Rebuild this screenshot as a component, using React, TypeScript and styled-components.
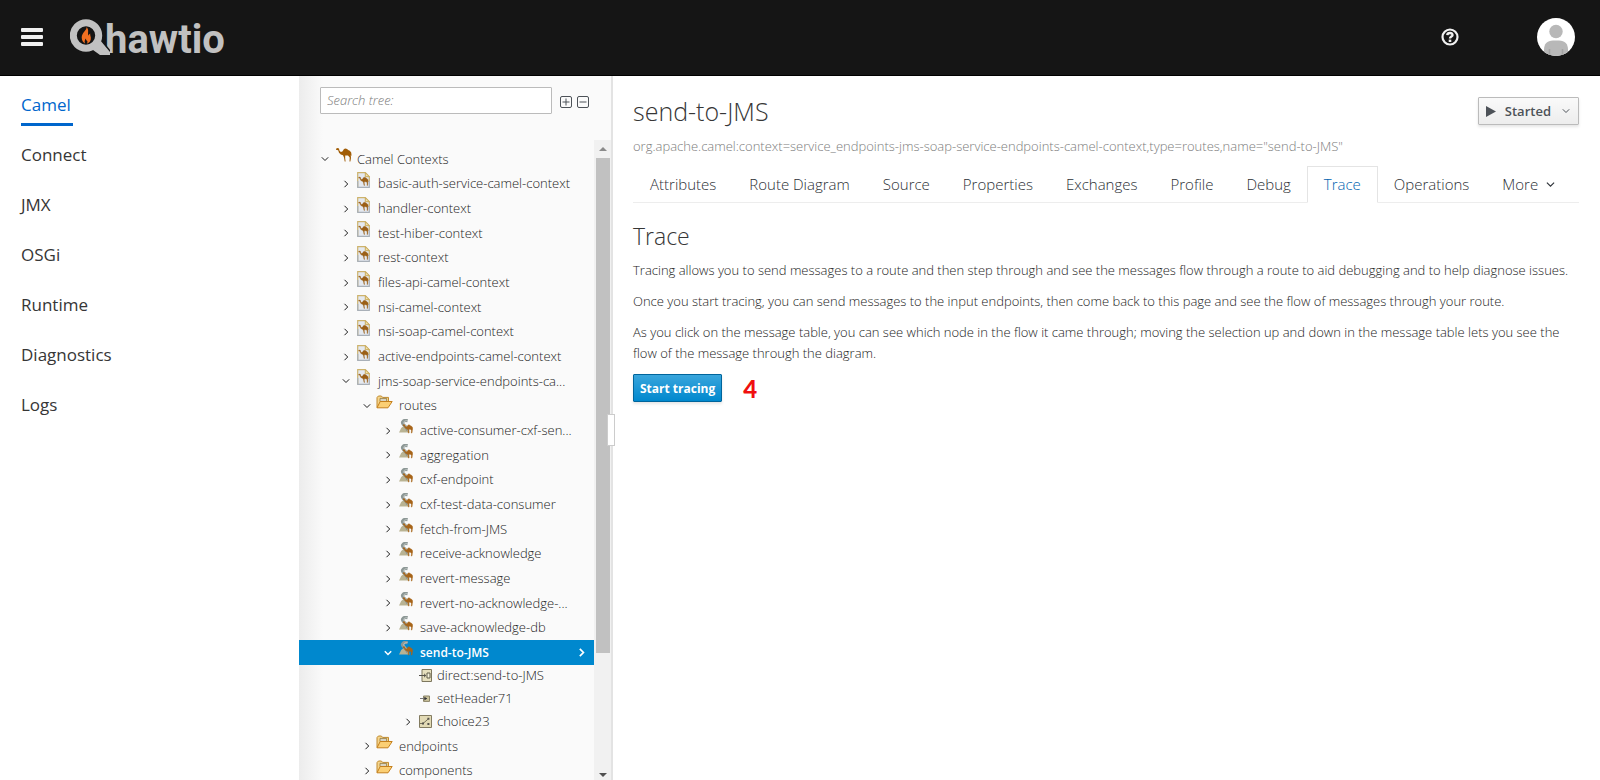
import React from 'react';
import styled, { createGlobalStyle, css } from 'styled-components';

const GlobalStyle = createGlobalStyle`
  *, *::before, *::after { box-sizing: border-box; }
  html, body, #root { height: 100%; }
  body {
    margin: 0;
    overflow: hidden;
    background: #fff;
    color: #1c1c1c;
    font-family: "Open Sans", "Noto Sans", sans-serif;
    font-size: 13px;
    font-weight: 350;
    line-height: 21px;
  }
  button, input { font: inherit; color: inherit; }
  ul { list-style: none; margin: 0; padding: 0; }
  svg { display: block; flex: none; }
`;

const Page = styled.div`
  display: flex;
  flex-direction: column;
  height: 100vh;
`;

const Header = styled.header`
  display: flex;
  align-items: center;
  flex: none;
  height: 76px;
  padding: 0 24px 2px 20px;
  background: #151515;
  border-bottom: 1px solid #000;
`;

const IconButton = styled.button`
  display: flex;
  padding: 0;
  border: 0;
  background: none;
  cursor: pointer;
`;

const Brand = styled.a`
  display: flex;
  align-items: center;
  margin-left: 26px;
  color: #c1c1c1;
  text-decoration: none;
  svg { position: relative; z-index: 1; }
`;

const BrandName = styled.span`
  margin-left: -5px;
  padding-top: 6px;
  font-family: Roboto, sans-serif;
  font-size: 40px;
  font-weight: 700;
  line-height: 44px;
`;

const HeaderTools = styled.div`
  display: flex;
  align-items: center;
  gap: 77px;
  margin-left: auto;
`;

const Body = styled.div`
  display: flex;
  flex: 1;
  min-height: 0;
`;

const Sidebar = styled.nav`
  flex: none;
  width: 299px;
  padding: 4px 21px;
`;

const NavItem = styled.li`
  display: flex;
  height: 50px;
  align-items: center;
`;

const NavLink = styled.a<{ $active?: boolean }>`
  color: #363636;
  font-size: 17px;
  font-weight: 400;
  line-height: 24px;
  text-decoration: none;
  ${({ $active }) =>
    $active &&
    css`
      min-width: 52px;
      margin-top: 8px;
      padding-bottom: 6px;
      border-bottom: 3px solid #06c;
      color: #06c;
    `}
`;

const TreePanel = styled.aside`
  display: flex;
  flex-direction: column;
  flex: none;
  width: 314px;
  background: linear-gradient(to right, #ececec, #fafafa 24px);
  border-right: 2px solid #e3e3e3;
`;

const TreeToolbar = styled.form`
  display: flex;
  align-items: center;
  flex: none;
  height: 64px;
  padding: 0 0 16px 21px;
`;

const SearchInput = styled.input`
  flex: none;
  width: 232px;
  height: 27px;
  margin-right: 8px;
  padding: 0 6px;
  border: 1px solid #bbb;
  border-radius: 1px;
  background: #fff;
  &::placeholder { color: #7c7c7c; font-style: italic; opacity: 1; }
`;

const ToolButton = styled(IconButton)`
  margin-right: 5px;
  padding-top: 3px;
  color: #4d5258;
`;

const TreeArea = styled.div`
  display: flex;
  flex: 1;
  min-height: 0;
`;

const Tree = styled.ul`
  flex: 1;
  min-width: 0;
  padding-top: 7px;
  overflow: hidden;
`;

const TreeRow = styled.li<{ $level: number; $selected?: boolean; $leaf?: boolean }>`
  display: flex;
  align-items: center;
  height: ${({ $leaf }) => ($leaf ? 23 : 25)}px;
  padding-left: ${({ $level, $leaf }) => 19 + $level * 21 - ($leaf ? 1 : 0)}px;
  padding-right: 8px;
  padding-bottom: ${({ $leaf }) => ($leaf ? 2 : 0)}px;
  ${({ $leaf }) => !$leaf && css`&:nth-child(3n + 1) { height: 24px; }`}
  ${({ $selected }) =>
    $selected &&
    css`
      background: #0088ce;
      color: #fff;
      font-size: 12px;
      font-weight: 600;
    `}
`;

const Toggle = styled(IconButton)<{ $hidden?: boolean }>`
  width: 14px;
  height: 14px;
  align-items: center;
  justify-content: center;
  visibility: ${({ $hidden }) => ($hidden ? 'hidden' : 'visible')};
`;

const NodeIcon = styled.span<{ $width: number }>`
  display: flex;
  justify-content: flex-start;
  width: ${({ $width }) => $width}px;
  margin-left: 4px;
  flex: none;
`;

const RaisedIcon = styled(NodeIcon)`
  padding-bottom: 8px;
`;

const FolderHolder = styled(RaisedIcon)`
  margin-left: 2px;
`;

const NodeLabel = styled.span`
  flex: 1;
  white-space: nowrap;
`;

const ScrollTrack = styled.div`
  display: flex;
  flex-direction: column;
  align-items: center;
  flex: none;
  width: 17px;
  background: #f1f1f1;
`;

const ScrollThumb = styled.div`
  flex: none;
  width: 14px;
  height: 495px;
  background: #c1c1c1;
`;

const ScrollArrow = styled.div`
  display: flex;
  align-items: center;
  justify-content: center;
  flex: none;
  height: 18px;
  &:last-child { height: 10px; margin-top: auto; }
`;

const Splitter = styled.div`
  position: relative;
  width: 0;
`;

const SplitterHandle = styled.div`
  position: absolute;
  top: 338px;
  left: -6px;
  width: 8px;
  height: 32px;
  border: 1px solid #ccc;
  background: #fff;
`;

const Main = styled.main`
  flex: 1;
  min-width: 0;
  padding: 20px 21px 0 20px;
`;

const TitleRow = styled.div`
  display: flex;
  justify-content: space-between;
  align-items: flex-start;
`;

const Title = styled.h1`
  margin: 0;
  color: #363636;
  font-size: 25px;
  font-weight: 300;
  line-height: 30px;
`;

const StatusButton = styled.button`
  display: flex;
  align-items: center;
  height: 28px;
  margin-top: 1px;
  padding: 0 8px 0 7px;
  border: 1px solid #bbb;
  border-radius: 1px;
  background: linear-gradient(#fafafa, #ededed);
  box-shadow: 0 2px 3px rgba(3, 3, 3, 0.1);
  color: #4d5258;
  font-weight: 600;
  span { margin: 0 11px 0 9px; }
`;

const ObjectName = styled.p`
  margin: 10px 0 9px;
  color: #7c7c7c;
`;

const Tabs = styled.ul`
  display: flex;
  border-bottom: 1px solid #ededed;
`;

const TabLink = styled.a<{ $active?: boolean }>`
  display: flex;
  align-items: center;
  gap: 8px;
  height: 37px;
  margin: 0 -1px -1px 0;
  padding: 0 16px;
  border: 1px solid transparent;
  color: #2c3036;
  font-size: 15px;
  white-space: nowrap;
  text-decoration: none;
  ${({ $active }) =>
    $active &&
    css`
      border-color: #e4e4e4 #e4e4e4 #fff;
      background: #fff;
      color: #0063b0;
    `}
`;

const SectionTitle = styled.h2`
  margin: 19px 0 10px;
  color: #363636;
  font-size: 23px;
  font-weight: 300;
  line-height: 28px;
`;

const Paragraph = styled.p`
  margin: 0 0 10px;
`;

const Actions = styled.div`
  display: flex;
  align-items: center;
  gap: 21px;
`;

const PrimaryButton = styled.button`
  height: 28px;
  padding: 0 6px;
  border: 1px solid #00659c;
  border-radius: 1px;
  background: linear-gradient(#39a5dc, #0088ce);
  box-shadow: 0 2px 3px rgba(3, 3, 3, 0.1);
  color: #fff;
  font-size: 12px;
  font-weight: 700;
`;

const StepNumber = styled.span`
  color: #f00f0f;
  font-family: Lato, sans-serif;
  font-size: 24px;
  font-weight: 900;
`;

const Chevron = ({ down, size = 8, weight = 1 }: { down?: boolean; size?: number; weight?: number }) => (
  <svg width={size} height={size} viewBox="0 0 8 8" fill="none" stroke="currentColor" strokeWidth={weight}>
    <path d={down ? 'M.8 2.3 4 5.5 7.2 2.3' : 'M2.5.8 5.7 4 2.5 7.2'} />
  </svg>
);

const camelShape =
  'M0 .8 1.6 0 3 .6 3.4 2.6 4.8 4 6.4 3.4 8 1 9.6.4 11 1 12.6 2.2 13.8 2.8 15.2 4.4 15.6 8 14.8 7 15 10 14.4 13.6 13.5 13.6 13.7 9.4 12 7.6 9.2 7.6 9.2 10.4 9.6 13.6 8.7 13.6 8 9.6 7 7.2 4.8 6.6 3 4.8 2.2 2.2 0 1.7Z';

const CamelIcon = () => (
  <svg width="17" height="15" viewBox="0 0 17 15" fill="#a15c05">
    <path d={camelShape} />
  </svg>
);

const ContextIcon = () => (
  <svg width="13" height="16" viewBox="0 0 13 16">
    <path d="M.7.7h7.6l4 4v10.6H.7z" fill="#e4e9f0" />
    <path d="M.7 15.3V.7h7.6l4 4V9" fill="none" stroke="#cdb36c" strokeWidth="1.2" />
    <path d="M.7 9v6.3h11.6V9" fill="none" stroke="#a9b0b8" strokeWidth="1.2" />
    <path d="M8.3.7v4h4z" fill="#f4e3ac" stroke="#c9ab5c" />
    <path d={camelShape} fill="#9b5f16" stroke="#9b5f16" strokeWidth=".5" transform="translate(1.6 5) scale(.62)" />
  </svg>
);

const FolderIcon = () => (
  <svg width="17" height="14" viewBox="0 0 17 14" strokeLinejoin="round">
    <path d="M1 12.6V2.6L2.4 1h3l1.2 1.4H12.5v4" fill="#f6d58b" stroke="#c08a2e" />
    <path d="M4 3.4h6.6V6.5H4z" fill="#d8d4c4" stroke="#8f7640" strokeWidth=".8" />
    <path d="M1 12.8 4.2 6.5h12L12 12.8z" fill="#fbcf74" stroke="#c5801d" />
  </svg>
);

const RouteIcon = () => (
  <svg width="14" height="15" viewBox="0 0 14 15">
    <path d="M0 13.4 2.2 9l3-2.4 4 3 1.5 3.8z" fill="#b9b393" />
    <path d="M8.6 1.6C4.6.8 2.6 2.8 4 5s5 3 4.6 7" fill="none" stroke="#8c9795" strokeWidth="3.2" />
    <path d="M8.6 1.6C5.6 1.6 4 2.800 5.200 4.800S9.600 7.600 8.800 12" fill="none" stroke="#cdd2cf" strokeWidth=".8" />
    <path d={camelShape} fill="#a8651a" stroke="#a8651a" strokeWidth=".8" transform="translate(4 5.6) scale(.62)" />
  </svg>
);

const EndpointIcon = () => (
  <svg width="13" height="13" viewBox="0 0 13 13" fill="none">
    <path d="M3 .5h9.5v12H3z" fill="#e6dfbe" stroke="#7d775e" />
    <path d="M8 4h3v5H8z" fill="#f6f2dc" stroke="#5e5a48" />
    <path d="M0 6.5h6.6M5 4.8l1.8 1.7L5 8.2" stroke="#55524a" />
  </svg>
);

const ProcessorIcon = () => (
  <svg width="12" height="13" viewBox="0 0 12 13" fill="none">
    <path d="M4.5 4h6v5.4h-6z" fill="#cbc39c" stroke="#8b8467" />
    <path d="M1 6.5h7" stroke="#777" />
    <path d="M5.4 4.8 8.2 6.6 5.4 8.4z" fill="#333" />
  </svg>
);

const ChoiceIcon = () => (
  <svg width="13" height="13" viewBox="0 0 13 13" fill="none">
    <path d="M.5.5h12v12H.5z" fill="#e2dab5" stroke="#827b60" />
    <path d="M1 8.5h3M4 8.5 9 4.2" stroke="#77725c" />
    <path d="M8.4 2.8h2v2h-2zM8.4 8h2v2h-2zM3 7.4h2v2H3z" fill="#55524a" />
  </svg>
);

const icons = {
  camel: CamelIcon,
  context: ContextIcon,
  folder: FolderIcon,
  route: RouteIcon,
  endpoint: EndpointIcon,
  processor: ProcessorIcon,
  choice: ChoiceIcon,
};

type TreeNode = {
  label: string;
  level: number;
  icon: keyof typeof icons;
  open?: boolean;
  selected?: boolean;
  childless?: boolean;
};

const routes = [
  'active-consumer-cxf-sen...',
  'aggregation',
  'cxf-endpoint',
  'cxf-test-data-consumer',
  'fetch-from-JMS',
  'receive-acknowledge',
  'revert-message',
  'revert-no-acknowledge-...',
  'save-acknowledge-db',
];

const contexts = [
  'basic-auth-service-camel-context',
  'handler-context',
  'test-hiber-context',
  'rest-context',
  'files-api-camel-context',
  'nsi-camel-context',
  'nsi-soap-camel-context',
  'active-endpoints-camel-context',
];

const nodes: TreeNode[] = [
  { label: 'Camel Contexts', level: 0, icon: 'camel', open: true },
  ...contexts.map((label): TreeNode => ({ label, level: 1, icon: 'context' })),
  { label: 'jms-soap-service-endpoints-ca...', level: 1, icon: 'context', open: true },
  { label: 'routes', level: 2, icon: 'folder', open: true },
  ...routes.map((label): TreeNode => ({ label, level: 3, icon: 'route' })),
  { label: 'send-to-JMS', level: 3, icon: 'route', open: true, selected: true },
  { label: 'direct:send-to-JMS', level: 4, icon: 'endpoint', childless: true },
  { label: 'setHeader71', level: 4, icon: 'processor', childless: true },
  { label: 'choice23', level: 4, icon: 'choice' },
  { label: 'endpoints', level: 2, icon: 'folder' },
  { label: 'components', level: 2, icon: 'folder' },
];

const iconColumn = { camel: 21, context: 21, folder: 23, route: 21, endpoint: 18, processor: 18, choice: 18 };

const holderFor = (node: TreeNode) => {
  if (node.level === 4) return NodeIcon;
  return node.icon === 'folder' ? FolderHolder : RaisedIcon;
};

const navItems = ['Camel', 'Connect', 'JMX', 'OSGi', 'Runtime', 'Diagnostics', 'Logs'];

const tabs = [
  'Attributes',
  'Route Diagram',
  'Source',
  'Properties',
  'Exchanges',
  'Profile',
  'Debug',
  'Trace',
  'Operations',
  'More',
];

export default function App() {
  return (
    <Page>
      <GlobalStyle />
      <Header>
        <IconButton type="button" aria-label="Toggle navigation">
          <svg width="24" height="20" viewBox="0 0 24 20" fill="#f0f0f0">
            <rect x="1" y="1" width="22" height="4" rx="1" />
            <rect x="1" y="8" width="22" height="4" rx="1" />
            <rect x="1" y="15" width="22" height="4" rx="1" />
          </svg>
        </IconButton>
        <Brand href="#">
          <svg width="40" height="38" viewBox="0 0 40 38">
            <path d="M20 30l7-7 4-1 9 12v3H30l-7-5z" fill="#c1c1c1" />
            <path d="M31 22l10 12" stroke="#151515" strokeWidth="1.5" />
            <circle cx="16" cy="17.5" r="9.5" fill="#151515" />
            <circle cx="16" cy="17.5" r="12.7" fill="none" stroke="#c1c1c1" strokeWidth="7" />
            <path
              d="M16.5 9c.8 3-4.8 5.5-4.8 10.5 0 3 1.5 5 3.3 6-.8-2.5 0-4 1-5 0 1.500.5 2 1.300 2.500.3 1 0 2-.5 2.800 2.800-1 4.400-3.300 4-6.300-.2-1.500-.8-2.500-.6-4-1 .4-1.500 1.300-1.500 2.300-1.700-2.500 1-5.500-2.200-8.800z"
              fill="#f37021"
            />
          </svg>
          <BrandName>hawtio</BrandName>
        </Brand>
        <HeaderTools>
          <IconButton type="button" aria-label="Help">
            <svg width="18" height="18" viewBox="0 0 18 18" fill="none" stroke="#f0f0f0">
              <circle cx="9" cy="9" r="7.5" strokeWidth="2.2" />
              <path d="M6.3 7.2C6.5 4.3 11.7 4.3 11.5 7.2 11.4 8.7 9 8.6 9 10.6" strokeWidth="2.4" />
              <path d="M9 11.6v2.4" strokeWidth="2.6" />
            </svg>
          </IconButton>
          <IconButton type="button" aria-label="User menu">
            <svg width="40" height="40" viewBox="0 0 40 40">
              <clipPath id="avatar">
                <circle cx="20" cy="20" r="19" />
              </clipPath>
              <g clipPath="url(#avatar)">
                <path d="M0 0h40v40H0z" fill="#fff" />
                <circle cx="20" cy="14.5" r="6.7" fill="#b8b8b8" />
                <path d="M8 40v-7c0-6 3-9.5 9-9.5h6c6 0 9 3.5 9 9.5v7z" fill="#b8b8b8" />
                <path d="M13.5 32v8M26.5 32v8" stroke="#a3a3a3" strokeWidth="1.5" />
              </g>
            </svg>
          </IconButton>
        </HeaderTools>
      </Header>
      <Body>
        <Sidebar aria-label="Main">
          <ul>
            {navItems.map((item, i) => (
              <NavItem key={item}>
                <NavLink href="#" $active={i === 0}>
                  {item}
                </NavLink>
              </NavItem>
            ))}
          </ul>
        </Sidebar>
        <TreePanel>
          <TreeToolbar>
            <SearchInput type="text" placeholder="Search tree:" aria-label="Search tree" />
            {['Expand all', 'Collapse all'].map((label, i) => (
              <ToolButton key={label} type="button" aria-label={label}>
                <svg width="12" height="12" viewBox="0 0 12 12" fill="none" stroke="currentColor">
                  <rect x=".5" y=".5" width="11" height="11" rx="1.5" />
                  <path d={i === 0 ? 'M2.5 6h7M6 2.5v7' : 'M2.5 6h7'} />
                </svg>
              </ToolButton>
            ))}
          </TreeToolbar>
          <TreeArea>
            <Tree>
              {nodes.map((node) => {
                const Icon = icons[node.icon];
                const Holder = holderFor(node);
                return (
                  <TreeRow
                    key={node.label}
                    $level={node.level}
                    $selected={node.selected}
                    $leaf={node.level === 4}
                  >
                    <Toggle type="button" aria-label={`Toggle ${node.label}`} $hidden={node.childless}>
                      <Chevron down={node.open} weight={node.selected ? 1.5 : 1} />
                    </Toggle>
                    <Holder $width={iconColumn[node.icon]}>
                      <Icon />
                    </Holder>
                    <NodeLabel>{node.label}</NodeLabel>
                    {node.selected && <Chevron size={9} weight={1.5} />}
                  </TreeRow>
                );
              })}
            </Tree>
            <ScrollTrack>
              <ScrollArrow>
                <svg width="8" height="4" fill="#8a8a8a">
                  <path d="M0 4 4 0l4 4z" />
                </svg>
              </ScrollArrow>
              <ScrollThumb />
              <ScrollArrow>
                <svg width="8" height="4" fill="#505050">
                  <path d="M0 0h8L4 4z" />
                </svg>
              </ScrollArrow>
            </ScrollTrack>
          </TreeArea>
        </TreePanel>
        <Splitter>
          <SplitterHandle />
        </Splitter>
        <Main>
          <TitleRow>
            <Title>send-to-JMS</Title>
            <StatusButton type="button">
              <svg width="10" height="11" fill="#4d5258">
                <path d="M0 0l10 5.5L0 11z" />
              </svg>
              <span>Started</span>
              <Chevron down />
            </StatusButton>
          </TitleRow>
          <ObjectName>
            org.apache.camel:context=service_endpoints-jms-soap-service-endpoints-camel-context,type=routes,name="send-to-JMS"
          </ObjectName>
          <Tabs>
            {tabs.map((tab) => (
              <li key={tab}>
                <TabLink href="#" $active={tab === 'Trace'}>
                  {tab}
                  {tab === 'More' && <Chevron down size={9} />}
                </TabLink>
              </li>
            ))}
          </Tabs>
          <SectionTitle>Trace</SectionTitle>
          <Paragraph>
            Tracing allows you to send messages to a route and then step through and see the messages flow through a
            route to aid debugging and to help diagnose issues.
          </Paragraph>
          <Paragraph>
            Once you start tracing, you can send messages to the input endpoints, then come back to this page and see
            the flow of messages through your route.
          </Paragraph>
          <Paragraph>
            As you click on the message table, you can see which node in the flow it came through; moving the selection
            up and down in the message table lets you see the flow of the message through the diagram.
          </Paragraph>
          <Actions>
            <PrimaryButton type="button">Start tracing</PrimaryButton>
            <StepNumber>4</StepNumber>
          </Actions>
        </Main>
      </Body>
    </Page>
  );
}
